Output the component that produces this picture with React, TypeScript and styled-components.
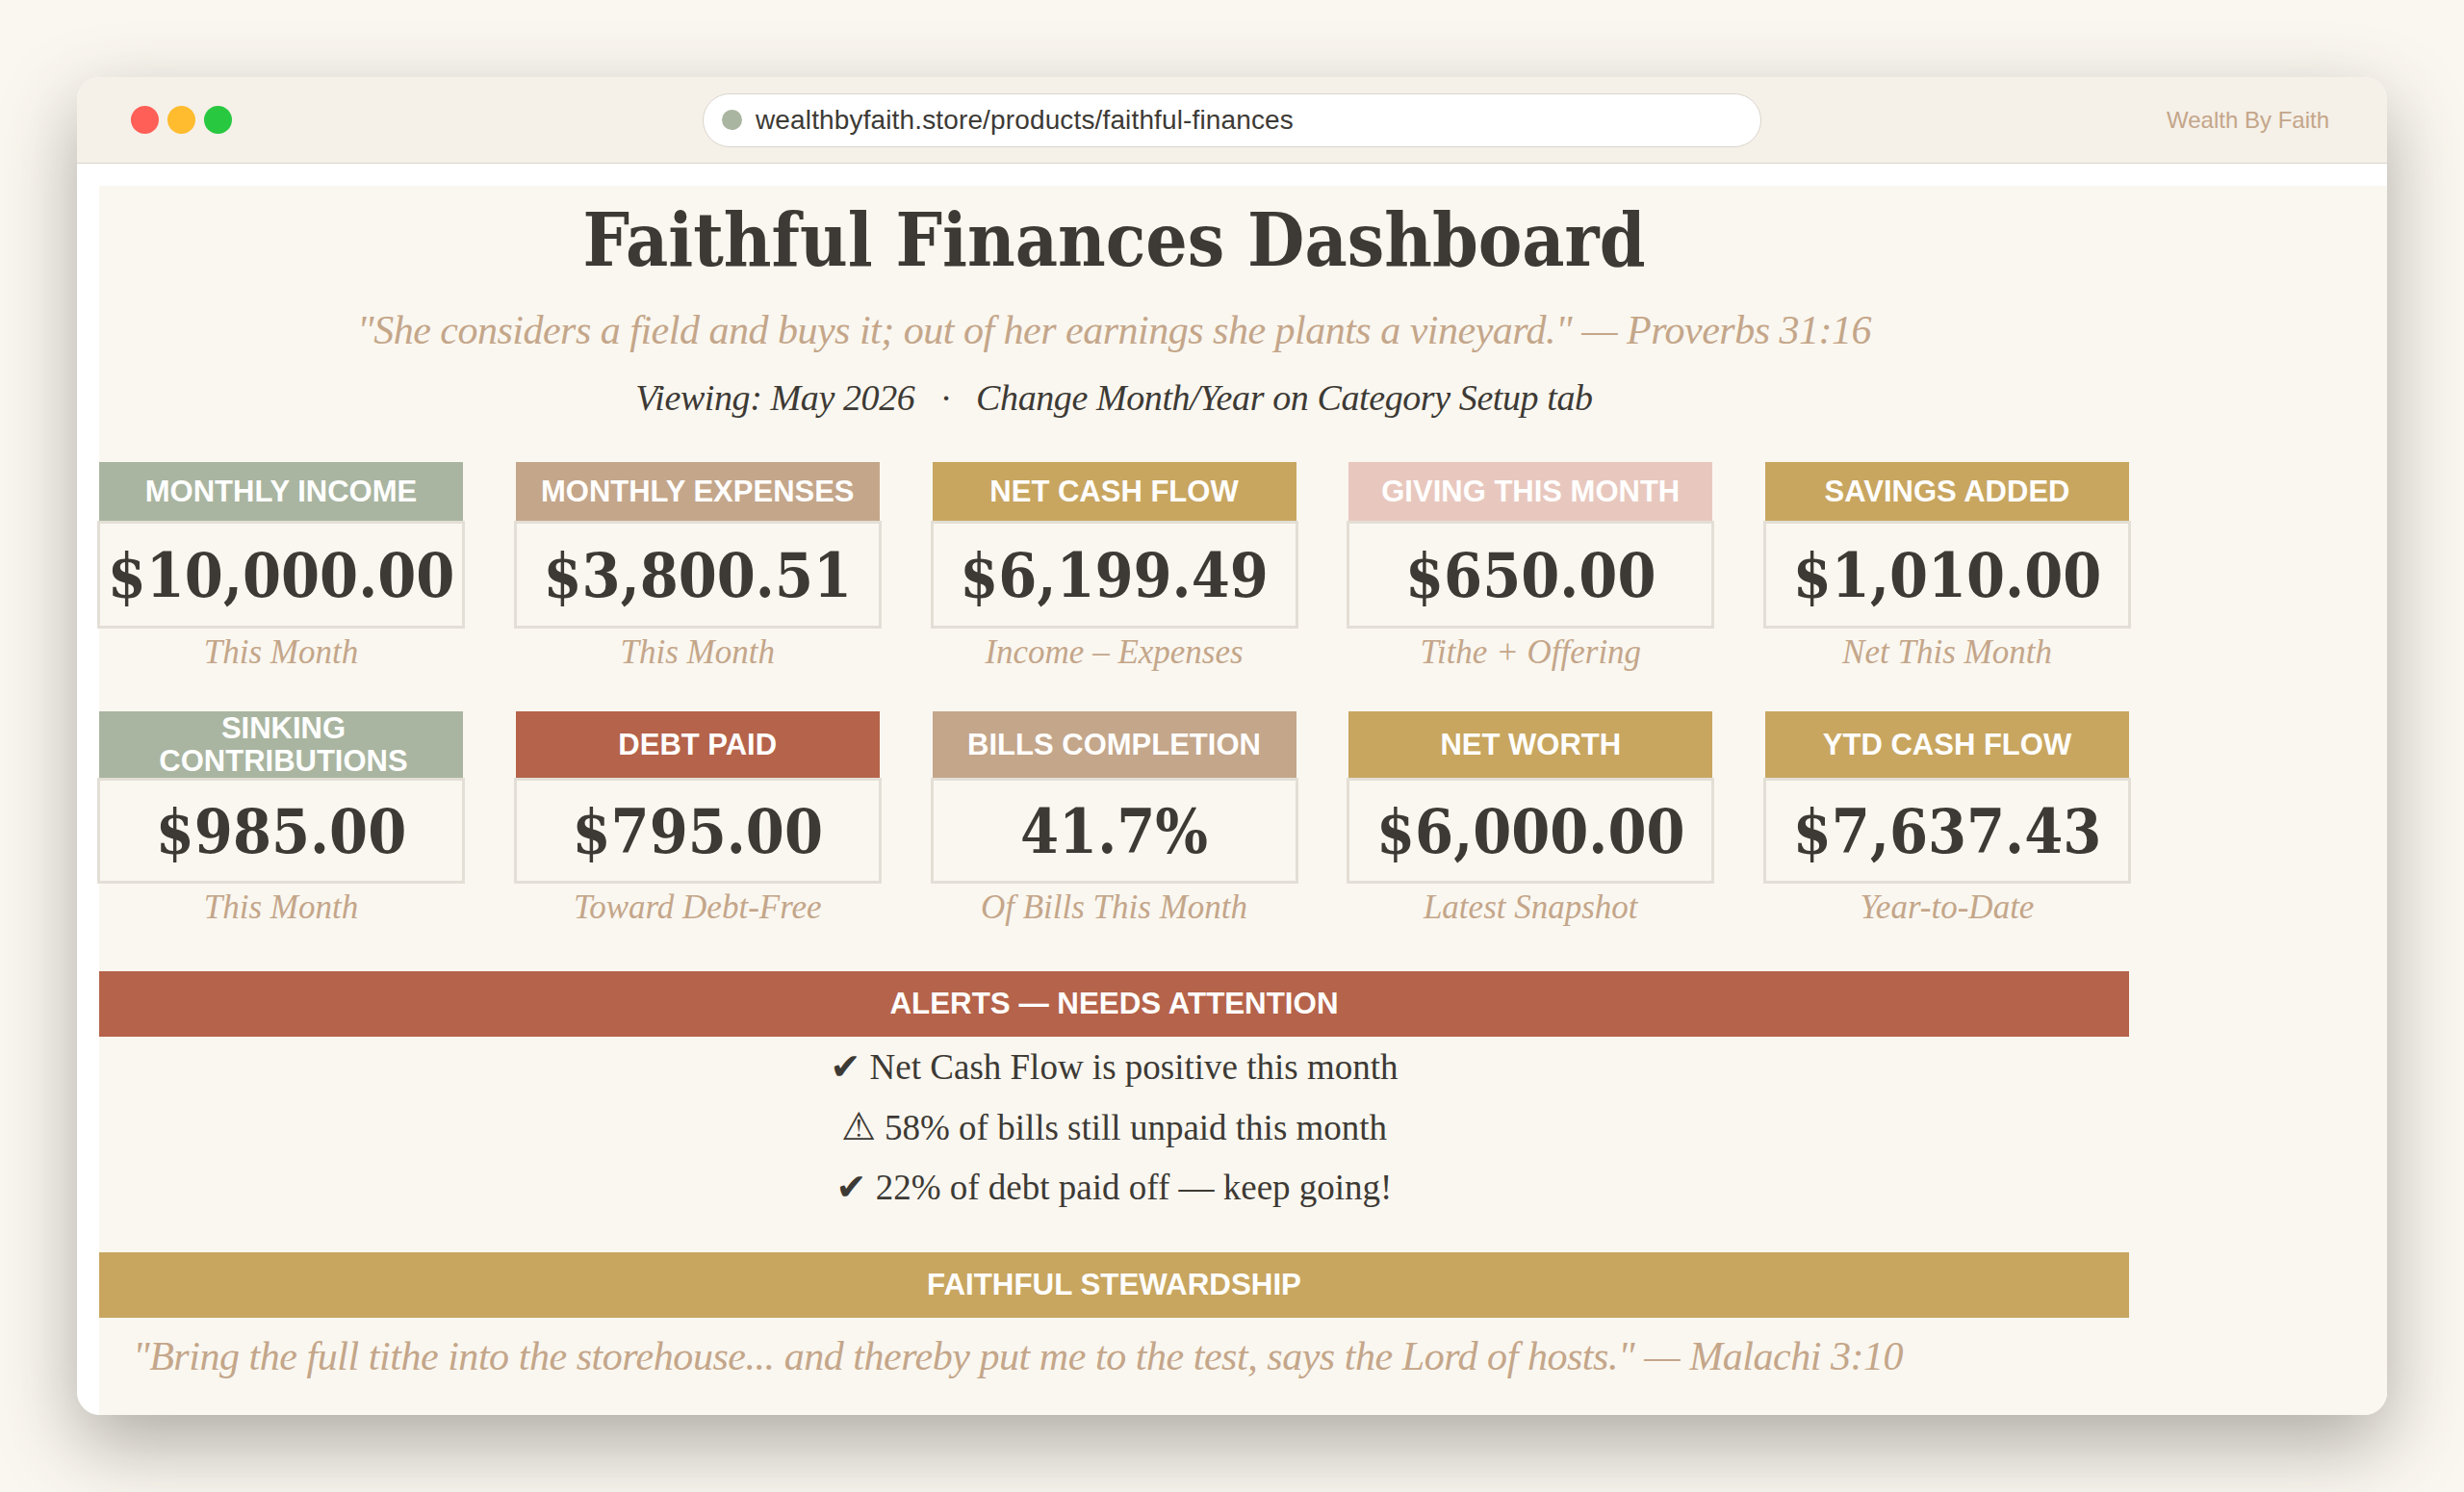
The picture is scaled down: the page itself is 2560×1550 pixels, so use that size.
import styled, { createGlobalStyle } from 'styled-components'

const cream = '#faf7f0'
const ink = '#3d3a35'
const tan = '#c4a68a'
const sage = '#a9b5a0'
const gold = '#c8a660'
const rust = '#b5634a'
const blush = '#e8c8be'

const serif = '"Liberation Serif", "Times New Roman", serif'
const display = '"DejaVu Serif Condensed", "DejaVu Serif", serif'
const sans = '"Liberation Sans", Arial, sans-serif'

const GlobalStyle = createGlobalStyle`
	html, body {
		margin: 0;
		height: 1550px;
		overflow: hidden;
		background: ${cream};
	}
`

const Stage = styled.div`
	padding: 80px 80px 0;
`

const WindowShadow = styled.div`
	border-radius: 24px;
	box-shadow: 0 30px 80px rgba(61, 58, 53, 0.4);
`

const BrowserWindow = styled.div`
	width: 2400px;
	height: 1390px;
	background: #fff;
	border-radius: 24px;
	overflow: hidden;
	display: flex;
	flex-direction: column;
`

const Toolbar = styled.div`
	height: 89px;
	flex: none;
	display: grid;
	grid-template-columns: 1fr 1100px 1fr;
	align-items: center;
	background: #f5f0e8;
	border-bottom: 1px solid #d9d4cc;
	box-sizing: content-box;
`

const Lights = styled.div`
	display: flex;
	gap: 9px;
	padding-left: 56px;
`

const Light = styled.span<{ $color: string }>`
	width: 29px;
	height: 29px;
	border-radius: 50%;
	background: ${(props) => props.$color};
`

const AddressBar = styled.div`
	height: 56px;
	box-sizing: border-box;
	display: flex;
	align-items: center;
	gap: 14px;
	padding-left: 19px;
	background: #fff;
	border: 1px solid #d9d4cc;
	border-radius: 28px;
	font: 28px ${sans};
	letter-spacing: 0.14px;
	color: ${ink};
`

const SecureDot = styled.span`
	width: 21px;
	height: 21px;
	border-radius: 50%;
	background: ${sage};
`

const SiteName = styled.div`
	justify-self: end;
	padding-right: 60px;
	font: 24px ${sans};
	color: ${tan};
`

const Viewport = styled.main`
	flex: 1;
	margin: 23px 0 0 23px;
	background: ${cream};
`

const Dashboard = styled.div`
	width: 2109px;
`

const Title = styled.h1`
	margin: 0;
	height: 110px;
	text-align: center;
	font: 700 76px/113px ${display};
	color: ${ink};
`

const Verse = styled.p`
	margin: 0;
	height: 80px;
	text-align: center;
	font: italic 42px/80px ${serif};
	letter-spacing: -0.5px;
	color: ${tan};
`

const Viewing = styled.p`
	margin: 0 0 37px;
	height: 60px;
	text-align: center;
	font: italic 38px/60px ${serif};
	letter-spacing: -0.4px;
	color: ${ink};
`

const MetricGrid = styled.div`
	display: grid;
	grid-template-columns: repeat(5, 378px);
	justify-content: space-between;
	row-gap: 36px;
`

const Metric = styled.div`
	min-width: 0;
`

const MetricLabel = styled.div<{ $bg: string; $tall?: boolean; $wrapped?: boolean }>`
	height: ${(props) => (props.$tall ? 69 : 61)}px;
	box-sizing: border-box;
	padding: 1px 0 0 ${(props) => (props.$wrapped ? 5 : 0)}px;
	display: flex;
	align-items: center;
	justify-content: center;
	text-align: center;
	background: ${(props) => props.$bg};
	color: #fff;
	font: 700 31px/34px ${sans};
`

const MetricValue = styled.div<{ $tall?: boolean }>`
	height: ${(props) => (props.$tall ? 112 : 110)}px;
	box-sizing: border-box;
	margin: 0 -2px;
	display: flex;
	align-items: center;
	justify-content: center;
	border: 3px solid #e3dfd6;
	white-space: nowrap;
	font: 700 64px ${display};
	color: ${ink};
`

const MetricNote = styled.div<{ $tall?: boolean }>`
	height: ${(props) => (props.$tall ? 50 : 54)}px;
	text-align: center;
	font: italic 35px/50px ${serif};
	color: ${tan};
`

const SectionBar = styled.div<{ $bg: string }>`
	height: 68px;
	background: ${(props) => props.$bg};
	text-align: center;
	color: #fff;
	font: 700 31.3px/68px ${sans};
`

const AlertBlock = styled.div`
	margin: 37px 0 35px;
`

const AlertList = styled.ul`
	margin: 1px 0 0;
	padding: 0;
	list-style: none;
`

const AlertItem = styled.li`
	height: 62.5px;
	text-align: center;
	font: 37px/62.5px ${serif};
	color: ${ink};
`

const AlertGlyph = styled.span<{ $size: number }>`
	font-family: "DejaVu Sans", sans-serif;
	font-size: ${(props) => props.$size}px;
	line-height: 1;
`

const ClosingVerse = styled.p`
	margin: 0;
	padding-left: 35px;
	font: italic 42px/80px ${serif};
	letter-spacing: -0.46px;
	color: ${tan};
`

const metrics = [
	[
		{ label: 'MONTHLY INCOME', value: '$10,000.00', note: 'This Month', bg: sage },
		{ label: 'MONTHLY EXPENSES', value: '$3,800.51', note: 'This Month', bg: tan },
		{ label: 'NET CASH FLOW', value: '$6,199.49', note: 'Income – Expenses', bg: gold },
		{ label: 'GIVING THIS MONTH', value: '$650.00', note: 'Tithe + Offering', bg: blush },
		{ label: 'SAVINGS ADDED', value: '$1,010.00', note: 'Net This Month', bg: gold },
	],
	[
		{ label: 'SINKING CONTRIBUTIONS', value: '$985.00', note: 'This Month', bg: sage },
		{ label: 'DEBT PAID', value: '$795.00', note: 'Toward Debt-Free', bg: rust },
		{ label: 'BILLS COMPLETION', value: '41.7%', note: 'Of Bills This Month', bg: tan },
		{ label: 'NET WORTH', value: '$6,000.00', note: 'Latest Snapshot', bg: gold },
		{ label: 'YTD CASH FLOW', value: '$7,637.43', note: 'Year-to-Date', bg: gold },
	],
]

const alerts = [
	{ glyph: '✔', size: 38, text: 'Net Cash Flow is positive this month' },
	{ glyph: '⚠', size: 40, text: '58% of bills still unpaid this month' },
	{ glyph: '✔', size: 38, text: '22% of debt paid off — keep going!' },
]

export default function App() {
	return (
		<>
			<GlobalStyle />
			<Stage>
				<WindowShadow>
					<BrowserWindow>
						<Toolbar>
							<Lights>
								<Light $color="#ff5f57" />
								<Light $color="#febc2e" />
								<Light $color="#28c840" />
							</Lights>
							<AddressBar>
								<SecureDot />
								wealthbyfaith.store/products/faithful-finances
							</AddressBar>
							<SiteName>Wealth By Faith</SiteName>
						</Toolbar>
						<Viewport>
							<Dashboard>
								<Title>Faithful Finances Dashboard</Title>
								<Verse>"She considers a field and buys it; out of her earnings she plants a vineyard." — Proverbs 31:16</Verse>
								<Viewing>Viewing: May 2026 &nbsp; · &nbsp; Change Month/Year on Category Setup tab</Viewing>
								<MetricGrid>
									{metrics.map((row, rowIndex) =>
										row.map((metric) => (
											<Metric key={metric.label}>
												<MetricLabel
													$bg={metric.bg}
													$tall={rowIndex === 1}
													$wrapped={metric.label === 'SINKING CONTRIBUTIONS'}
												>
													{metric.label}
												</MetricLabel>
												<MetricValue $tall={rowIndex === 0}>{metric.value}</MetricValue>
												<MetricNote $tall={rowIndex === 0}>{metric.note}</MetricNote>
											</Metric>
										)),
									)}
								</MetricGrid>
								<AlertBlock>
									<SectionBar $bg={rust}>ALERTS — NEEDS ATTENTION</SectionBar>
									<AlertList>
										{alerts.map((alert) => (
											<AlertItem key={alert.text}>
												<AlertGlyph $size={alert.size}>{alert.glyph}</AlertGlyph> {alert.text}
											</AlertItem>
										))}
									</AlertList>
								</AlertBlock>
								<SectionBar $bg={gold}>FAITHFUL STEWARDSHIP</SectionBar>
								<ClosingVerse>"Bring the full tithe into the storehouse... and thereby put me to the test, says the Lord of hosts." — Malachi 3:10</ClosingVerse>
							</Dashboard>
						</Viewport>
					</BrowserWindow>
				</WindowShadow>
			</Stage>
		</>
	)
}
